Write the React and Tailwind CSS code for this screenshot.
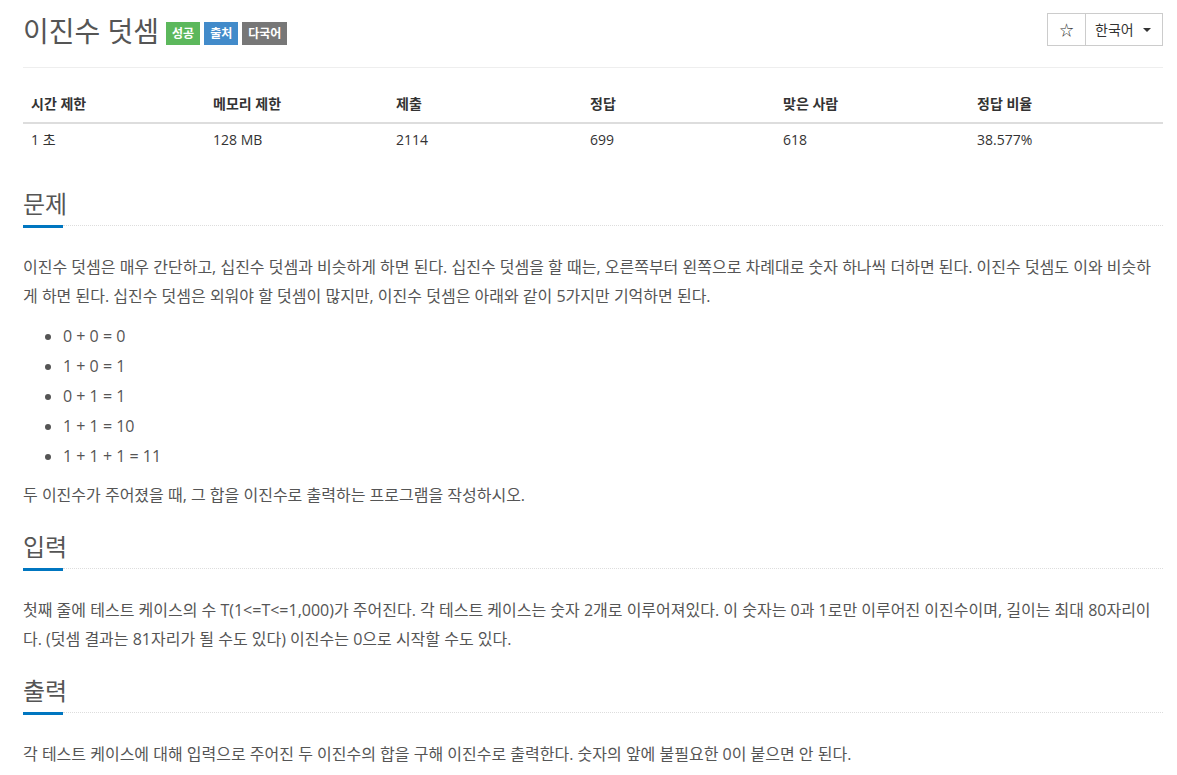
const stats = [
  { label: '시간 제한', value: '1 초', w: 'w-[182px]' },
  { label: '메모리 제한', value: '128 MB', w: 'w-[183px]' },
  { label: '제출', value: '2114', w: 'w-[194px]' },
  { label: '정답', value: '699', w: 'w-[193px]' },
  { label: '맞은 사람', value: '618', w: 'w-[194px]' },
  { label: '정답 비율', value: '38.577%', w: '' },
];

const SectionTitle = ({ children, className = 'mt-[24px]' }) => (
  <div className={className}>
    <h2 className="text-[24px] leading-[26px] text-[#555] pb-[8px]">{children}</h2>
    <div className="flex items-start">
      <div className="w-[40px] h-[3px] bg-[#0076c0]" />
      <div className="flex-1 border-t border-dotted border-[#ddd]" />
    </div>
  </div>
);

const App = () => {
  return (
    <div className="min-h-screen bg-white font-['Open_Sans','Noto_Sans_CJK_KR',sans-serif] text-[#555]">
      <div className="w-[1140px] ml-[23px]">
        {/* Header */}
        <div className="flex justify-between items-start pt-[13px] pb-[18px] border-b border-[#eee]">
          <div className="flex items-center">
            <h1 className="text-[28px] leading-[36px] text-[#555]">이진수 덧셈</h1>
            <div className="flex items-center gap-[4px] ml-[7px] mt-[5px]">
              <span className="bg-[#5cb85c] text-white text-[12px] font-bold px-[6px] h-[23px] flex items-center">성공</span>
              <span className="bg-[#428bca] text-white text-[12px] font-bold px-[6px] h-[23px] flex items-center">출처</span>
              <span className="bg-[#777] text-white text-[12px] font-bold px-[6px] h-[23px] flex items-center">다국어</span>
            </div>
          </div>
          <div className="flex">
            <button className="w-[39px] h-[33px] border border-[#ccc] flex items-center justify-center text-[14px] text-[#333]">☆</button>
            <button className="w-[77px] h-[33px] border border-l-0 border-[#ccc] flex items-center pl-[9px] pr-[11px] text-[14px] text-[#333]">
              한국어
              <span className="ml-auto w-0 h-0 border-l-[4px] border-r-[4px] border-t-[4px] border-l-transparent border-r-transparent border-t-[#333]" />
            </button>
          </div>
        </div>

        {/* Stats table */}
        <table className="mt-[18px] w-full text-[14px] border-collapse">
          <thead>
            <tr className="border-b-2 border-[#ddd]">
              {stats.map((s) => (
                <th key={s.label} className={`${s.w} text-left font-bold text-[#333] px-[8px] py-[8px] leading-[20px]`}>
                  {s.label}
                </th>
              ))}
            </tr>
          </thead>
          <tbody>
            <tr>
              {stats.map((s) => (
                <td key={s.label} className="px-[8px] pt-[6px] pb-[8px] leading-[20px] text-[#333]">
                  {s.value}
                </td>
              ))}
            </tr>
          </tbody>
        </table>

        {/* 문제 */}
        <SectionTitle className="mt-[33px]">문제</SectionTitle>
        <div className="text-[16px] leading-[29px] mt-[25px]">
          <p>
            이진수 덧셈은 매우 간단하고, 십진수 덧셈과 비슷하게 하면 된다. 십진수 덧셈을 할 때는, 오른쪽부터 왼쪽으로 차례대로 숫자 하나씩 더하면 된다. 이진수 덧셈도 이와 비슷하게 하면 된다. 십진수 덧셈은 외워야 할 덧셈이 많지만, 이진수 덧셈은 아래와 같이 5가지만 기억하면 된다.
          </p>
          <ul className="list-disc pl-[40px] mt-[10px] leading-[30px]">
            <li>0 + 0 = 0</li>
            <li>1 + 0 = 1</li>
            <li>0 + 1 = 1</li>
            <li>1 + 1 = 10</li>
            <li>1 + 1 + 1 = 11</li>
          </ul>
          <p className="mt-[10px]">두 이진수가 주어졌을 때, 그 합을 이진수로 출력하는 프로그램을 작성하시오.</p>
        </div>

        {/* 입력 */}
        <SectionTitle>입력</SectionTitle>
        <div className="text-[16px] leading-[29px] mt-[25px]">
          <p>
            첫째 줄에 테스트 케이스의 수 T(1&lt;=T&lt;=1,000)가 주어진다. 각 테스트 케이스는 숫자 2개로 이루어져있다. 이 숫자는 0과 1로만 이루어진 이진수이며, 길이는 최대 80자리이다. (덧셈 결과는 81자리가 될 수도 있다) 이진수는 0으로 시작할 수도 있다.
          </p>
        </div>

        {/* 출력 */}
        <SectionTitle>출력</SectionTitle>
        <div className="text-[16px] leading-[29px] mt-[25px] pb-[40px]">
          <p>각 테스트 케이스에 대해 입력으로 주어진 두 이진수의 합을 구해 이진수로 출력한다. 숫자의 앞에 불필요한 0이 붙으면 안 된다.</p>
        </div>
      </div>
    </div>
  );
};

export default App;
